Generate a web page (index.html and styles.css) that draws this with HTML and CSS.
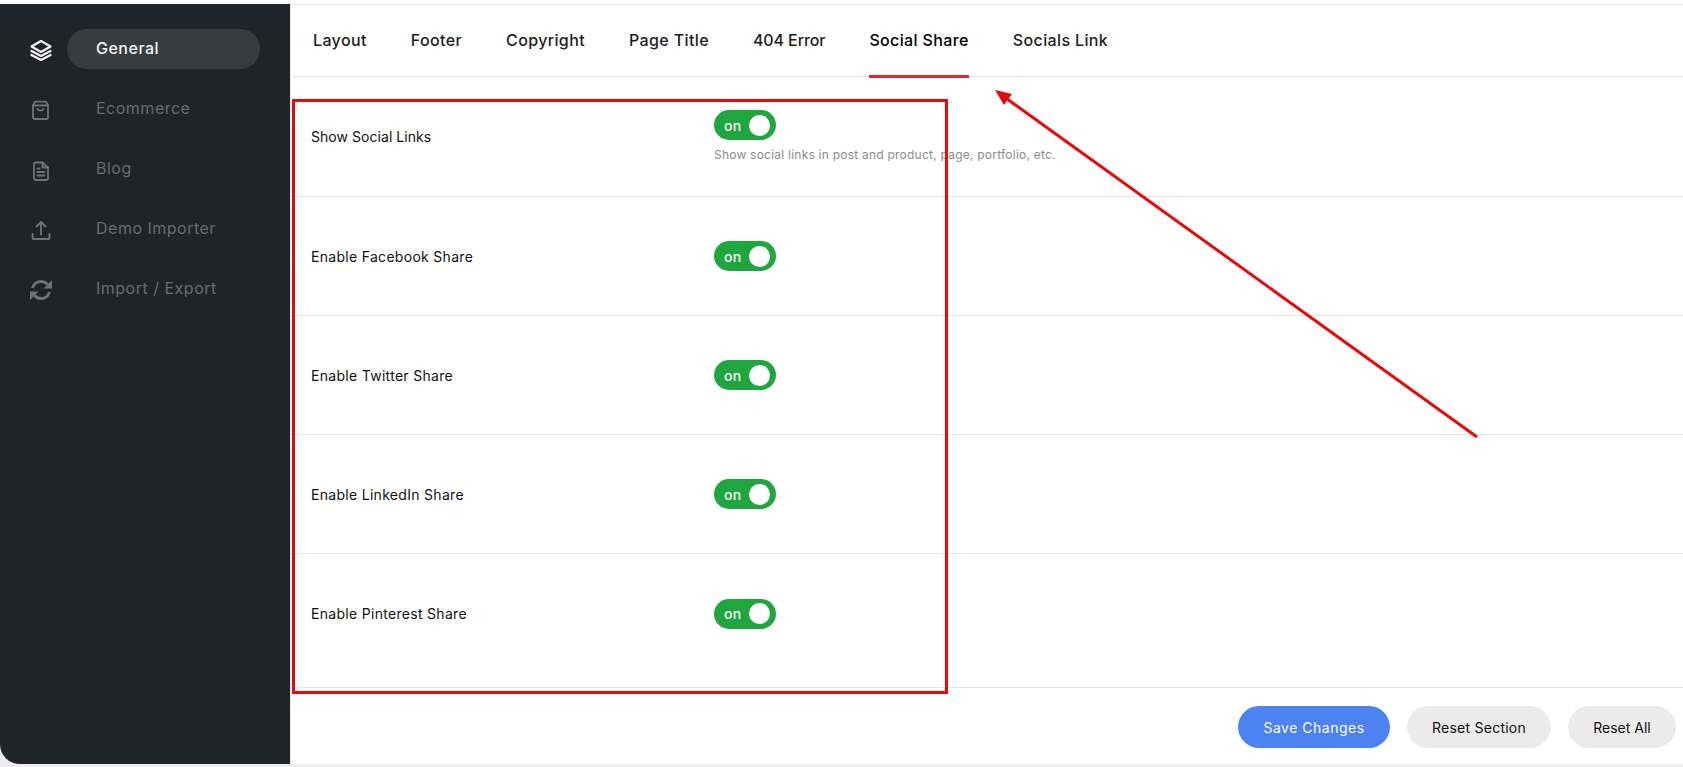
FILE: index.html
```html
<!DOCTYPE html>
<html lang="en">
<head>
  <meta charset="UTF-8">
  <meta name="viewport" content="width=device-width, initial-scale=1.0">
  <title>Theme Options</title>
  <link rel="stylesheet" href="styles.css">
</head>
<body>
  <div class="panel">
    <aside class="sidebar">
      <div class="nav-item active">
        <svg class="nav-icon" viewBox="0 0 24 24" fill="none" stroke="currentColor" stroke-width="2.200" stroke-linejoin="round" stroke-linecap="round">
          <path d="M12 4 21.500 9.500 12 15 2.500 9.500z"/>
          <path d="M2.500 14 12 19l9.500-5"/>
          <path d="M2.500 18 12 23l9.500-5"/>
        </svg>
        <span class="nav-label">General</span>
      </div>
      <div class="nav-item">
        <svg class="nav-icon" viewBox="0 0 24 24" fill="none" stroke="currentColor" stroke-width="1.800" stroke-linejoin="round" stroke-linecap="round">
          <path d="M4 8.500V20.500a1.500 1.500 0 0 0 1.500 1.500h12a1.500 1.500 0 0 0 1.500-1.500V8.500z"/>
          <path d="M4 8.500 5.500 5.500a1.500 1.500 0 0 1 1.300-.8h9.400a1.500 1.500 0 0 1 1.300.8L19 8.500"/>
          <path d="M8.500 12a3.500 3.500 0 0 0 6 0"/>
        </svg>
        <span class="nav-label">Ecommerce</span>
      </div>
      <div class="nav-item">
        <svg class="nav-icon" viewBox="0 0 24 24" fill="none" stroke="currentColor" stroke-width="1.800" stroke-linejoin="round" stroke-linecap="round">
          <path d="M13.500 5.500H6.500a1.500 1.500 0 0 0-1.500 1.500v14.500a1.500 1.500 0 0 0 1.500 1.500h11a1.500 1.500 0 0 0 1.500-1.500V10.500z"/>
          <path d="M13.500 5.500v5H19"/>
          <path d="M8.500 15h7M8.500 18.500h7M8.500 11.500h2"/>
        </svg>
        <span class="nav-label">Blog</span>
      </div>
      <div class="nav-item">
        <svg class="nav-icon" viewBox="0 0 24 24" fill="none" stroke="currentColor" stroke-width="1.900" stroke-linejoin="round" stroke-linecap="round">
          <path d="M3.500 17v4a1 1 0 0 0 1 1h15a1 1 0 0 0 1-1v-4"/>
          <path d="M12 17.500V5"/>
          <path d="M7.500 9.500 12 5l4.500 4.500"/>
        </svg>
        <span class="nav-label">Demo Importer</span>
      </div>
      <div class="nav-item">
        <svg class="nav-icon" viewBox="0 0 24 24" fill="none" stroke="currentColor" stroke-width="3">
          <path d="M3.500 11C4.500 7 8 4.500 12 4.500c2.800 0 5 1.200 6.500 3"/>
          <path d="M20.500 15C19.500 19 16 21.500 12 21.500c-2.800 0-5-1.200-6.500-3"/>
          <path d="M23 3v8.500h-8.500z" fill="currentColor" stroke="none"/>
          <path d="M1 23v-8.500h8.500z" fill="currentColor" stroke="none"/>
        </svg>
        <span class="nav-label">Import / Export</span>
      </div>
    </aside>

    <main class="content">
      <nav class="tabs">
        <a class="tab">Layout</a>
        <a class="tab">Footer</a>
        <a class="tab">Copyright</a>
        <a class="tab">Page Title</a>
        <a class="tab tab-tight">404 Error</a>
        <a class="tab selected">Social Share</a>
        <a class="tab">Socials Link</a>
      </nav>

      <div class="settings">
        <div class="row">
          <div class="row-label label-tight">Show Social Links</div>
          <div class="row-field">
            <div class="switch"><span>on</span><i></i></div>
            <p class="hint">Show social links in post and product, page, portfolio, etc.</p>
          </div>
        </div>
        <div class="row">
          <div class="row-label">Enable Facebook Share</div>
          <div class="row-field"><div class="switch"><span>on</span><i></i></div></div>
        </div>
        <div class="row">
          <div class="row-label">Enable Twitter Share</div>
          <div class="row-field"><div class="switch"><span>on</span><i></i></div></div>
        </div>
        <div class="row">
          <div class="row-label">Enable LinkedIn Share</div>
          <div class="row-field"><div class="switch"><span>on</span><i></i></div></div>
        </div>
        <div class="row">
          <div class="row-label">Enable Pinterest Share</div>
          <div class="row-field"><div class="switch"><span>on</span><i></i></div></div>
        </div>
      </div>

      <footer class="actions">
        <button class="btn btn-save">Save Changes</button>
        <button class="btn btn-section">Reset Section</button>
        <button class="btn btn-all">Reset All</button>
      </footer>
    </main>

    <!-- red markup drawn over the screenshot -->
    <svg class="markup" viewBox="0 0 1683 767">
      <rect x="293.500" y="100.500" width="653" height="592" fill="none" stroke="#e60b0b" stroke-width="3"/>
      <line x1="1477" y1="437" x2="1003" y2="96" stroke="#e60b0b" stroke-width="3"/>
      <path d="M995 90 1012 94 1004 105z" fill="#e60b0b"/>
    </svg>
  </div>
</body>
</html>
```

FILE: styles.css
```css
* {
  box-sizing: border-box;
}
html, body {
  margin: 0;
  height: 100%;
}
body {
  font-family: Inter, "Liberation Sans", sans-serif;
  background-color: #ffffff;
  overflow: hidden;
}
.panel {
  position: relative;
  display: flex;
  width: 1683px;
  height: 767px;
  padding: 4px 0 3px;
  background-color: #eeeef0;
  background-image: linear-gradient(#ffffff 4px, transparent 4px);
}
.sidebar {
  width: 290px;
  flex-shrink: 0;
  padding-top: 25px;
  background-color: #1f2428;
  border-radius: 0 0 0 20px;
}
.nav-item {
  display: flex;
  align-items: center;
  height: 40px;
  margin-bottom: 20px;
  padding-left: 29px;
  color: #686c70;
}
.nav-icon {
  width: 24px;
  height: 24px;
  flex-shrink: 0;
  color: #6f7376;
}
.nav-label {
  width: 193px;
  height: 40px;
  margin-left: 14px;
  padding-left: 29px;
  border-radius: 20px;
  font-size: 16px;
  line-height: 38px;
  letter-spacing: 0.5px;
}
.nav-item.active {
  color: #f2f3f3;
}
.nav-item.active .nav-icon {
  color: #f2f3f3;
}
.nav-item.active .nav-label {
  background-color: #373c40;
  font-weight: 500;
}
.content {
  flex: 1;
  display: flex;
  flex-direction: column;
  background-color: #ffffff;
  border-top: 1px solid #e8e8e8;
  border-left: 1px solid #e8e8e8;
}
.tabs {
  display: flex;
  height: 72px;
  padding-left: 22px;
  gap: 44px;
  border-bottom: 1px solid #e5e5e5;
}
.tab {
  position: relative;
  font-size: 16px;
  font-weight: 500;
  line-height: 71px;
  letter-spacing: 0.37px;
  color: #1d1d1d;
}
.tab-tight {
  letter-spacing: -0.1px;
}
.tab.selected {
  color: #000000;
}
.tab.selected::after {
  content: "";
  position: absolute;
  left: 0;
  right: 0;
  bottom: -2px;
  height: 3px;
  background-color: #dc2b33;
}
.settings {
  flex: 1;
  padding-top: 1px;
  border-bottom: 1px solid #e5e5e5;
}
.row {
  display: flex;
  align-items: center;
  height: 119px;
  padding-left: 20px;
  border-bottom: 1px solid #e5e5e5;
}
.row:first-child {
  padding-bottom: 2px;
}
.row:last-child {
  border-bottom: none;
}
.row-label {
  width: 403px;
  font-size: 14px;
  letter-spacing: 0.3px;
  color: #111111;
}
.label-tight {
  letter-spacing: 0.05px;
}
.switch {
  display: flex;
  align-items: center;
  justify-content: space-between;
  width: 62px;
  height: 30px;
  padding: 0 6px 0 10px;
  border-radius: 15px;
  background-color: #1fa63f;
  color: #ffffff;
  font-size: 14px;
  font-weight: 500;
  letter-spacing: 0.4px;
}
.switch i {
  width: 21px;
  height: 21px;
  border-radius: 50%;
  background-color: #ffffff;
}
.hint {
  margin: 7px 0 0;
  font-size: 12px;
  letter-spacing: 0.23px;
  color: #8c8c8c;
}
.actions {
  display: flex;
  justify-content: flex-end;
  align-items: center;
  gap: 17px;
  height: 76px;
  padding-right: 7px;
  padding-top: 2px;
}
.btn {
  height: 42px;
  border: none;
  border-radius: 21px;
  font-family: inherit;
  font-size: 14px;
  letter-spacing: 0.25px;
  background-color: #ebebeb;
  color: #111111;
}
.btn-save {
  width: 152px;
  background-color: #4d82f3;
  color: #ffffff;
  letter-spacing: 0.5px;
}
.btn-section {
  width: 144px;
}
.btn-all {
  width: 108px;
  letter-spacing: 0;
}
.markup {
  position: absolute;
  top: 0;
  left: 0;
  width: 1683px;
  height: 767px;
  pointer-events: none;
}
```
